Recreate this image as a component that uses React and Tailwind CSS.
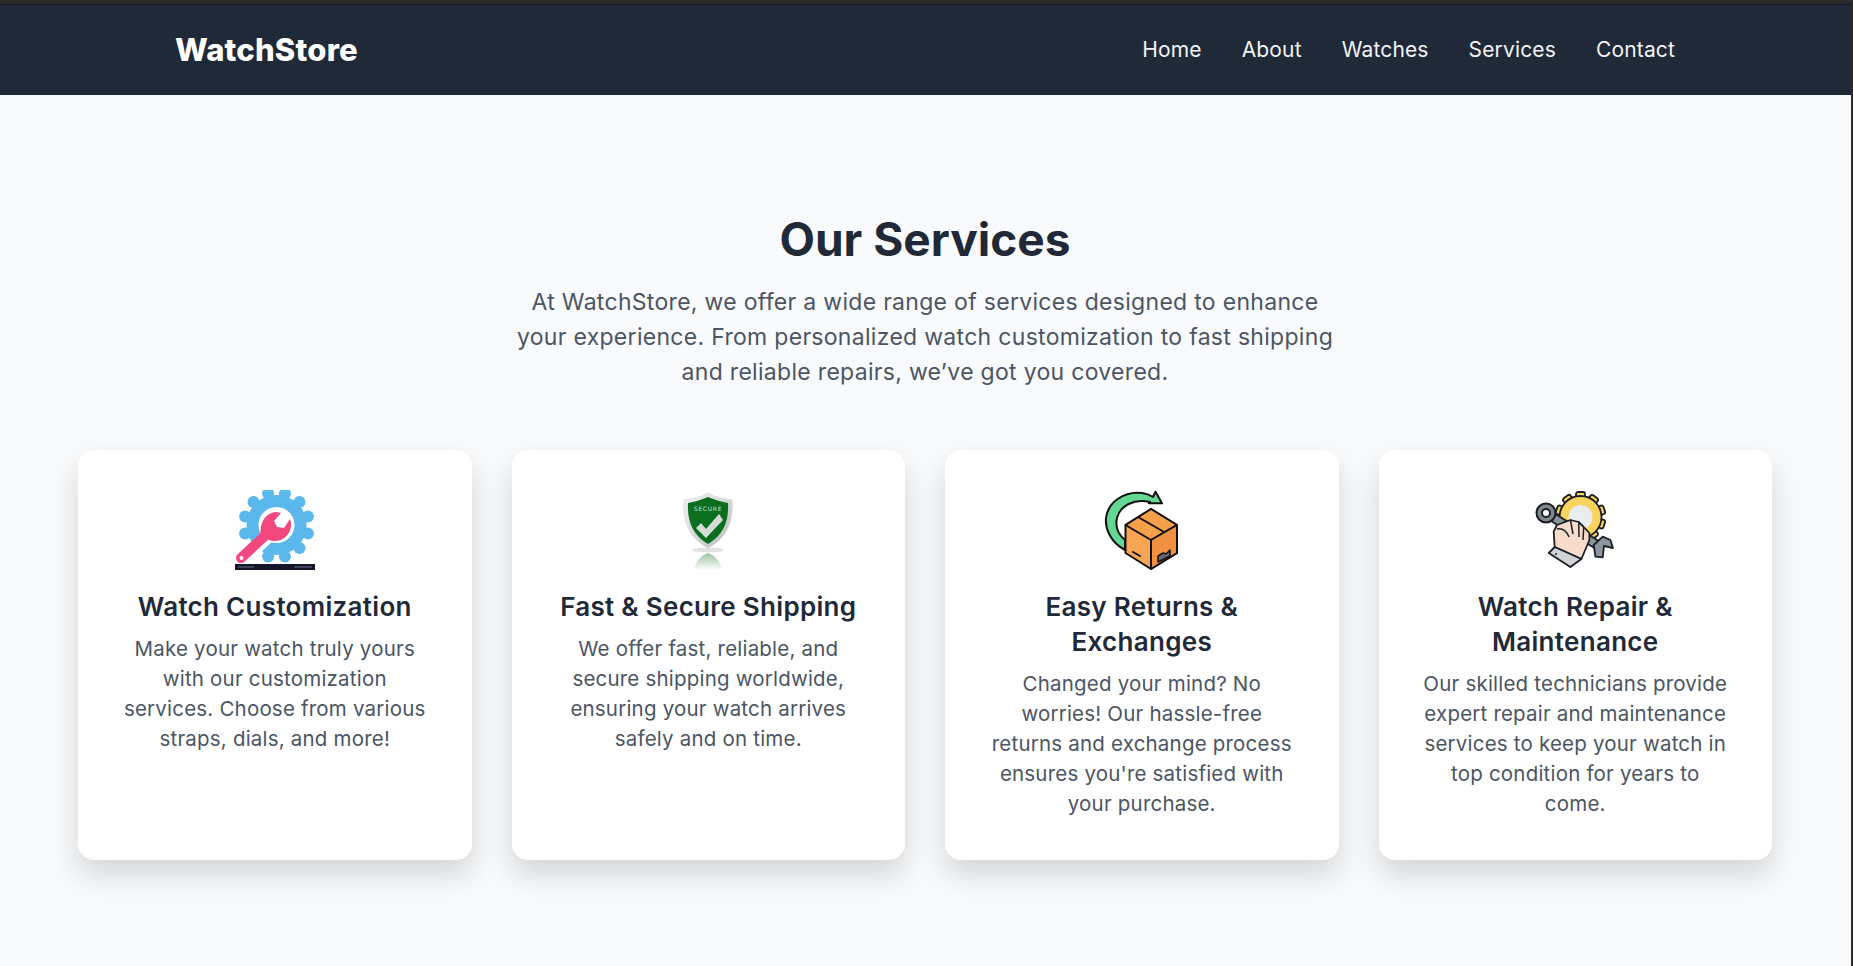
const services = [
  {
    title: ['Watch Customization'],
    text: ['Make your watch truly yours', 'with our customization', 'services. Choose from various', 'straps, dials, and more!'],
    icon: <GearWrenchIcon />,
  },
  {
    title: ['Fast & Secure Shipping'],
    text: ['We offer fast, reliable, and', 'secure shipping worldwide,', 'ensuring your watch arrives', 'safely and on time.'],
    icon: <ShieldIcon />,
  },
  {
    title: ['Easy Returns &', 'Exchanges'],
    text: ['Changed your mind? No', 'worries! Our hassle-free', 'returns and exchange process', "ensures you're satisfied with", 'your purchase.'],
    icon: <ReturnBoxIcon />,
  },
  {
    title: ['Watch Repair &', 'Maintenance'],
    text: ['Our skilled technicians provide', 'expert repair and maintenance', 'services to keep your watch in', 'top condition for years to', 'come.'],
    icon: <RepairIcon />,
  },
];

const navLinks = ['Home', 'About', 'Watches', 'Services', 'Contact'];

function GearWrenchIcon() {
  const bumps = [15, 45, 75, 105, 135, 165, 195, 225, 255, 285, 315, 345];
  return (
    <svg viewBox="0 0 80 80" className="w-20 h-20">
      {bumps.map((a) => (
        <circle
          key={a}
          cx={41.5 + 32.5 * Math.cos((a * Math.PI) / 180)}
          cy={35 + 32.5 * Math.sin((a * Math.PI) / 180)}
          r="6"
          fill="#5bb8ec"
        />
      ))}
      <circle cx="41.5" cy="35" r="24" fill="none" stroke="#5bb8ec" strokeWidth="12" />
      <path d="M8 70 L36 43" stroke="#fff" strokeWidth="14" strokeLinecap="round" />
      <path d="M6 68 L34 42" stroke="#f2477f" strokeWidth="10" strokeLinecap="round" />
      <path d="M26 45 C24 34 30 23 41 22 L46 23 L39 31 L42 37 L49 38 L55 29 C59 38 52 51 40 51 C35 51 31 49 31 49 Z" fill="#f2477f" />
      <circle cx="6.5" cy="68" r="2" fill="#fff" />
      <rect x="0" y="74" width="80" height="6" fill="#14152b" />
      <rect x="3" y="76.5" width="16" height="1" fill="#6b7280" />
      <rect x="59" y="76.5" width="18" height="1" fill="#6b7280" />
    </svg>
  );
}

function ShieldIcon() {
  return (
    <svg viewBox="0 0 80 80" className="w-20 h-20">
      <defs>
        <linearGradient id="rim" x1="0" y1="0" x2="1" y2="1">
          <stop offset="0" stopColor="#f4f4f4" />
          <stop offset="1" stopColor="#b8bcb8" />
        </linearGradient>
        <linearGradient id="fade" x1="0" y1="0" x2="0" y2="1">
          <stop offset="0" stopColor="#0a6e1e" stopOpacity="0.4" />
          <stop offset="1" stopColor="#0a6e1e" stopOpacity="0" />
        </linearGradient>
      </defs>
      <ellipse cx="40" cy="60" rx="16" ry="2.5" fill="#e0e2e0" />
      <path d="M40 3 C47 7 56 9 64 10 C66 32 58 49 40 58 C22 49 14 32 16 10 C24 9 33 7 40 3 Z" fill="url(#rim)" stroke="#d4d6d4" strokeWidth="0.6" />
      <path d="M40 7 C47 10 54 12 60 13 C61 32 55 45 40 54 C25 45 19 32 20 13 C26 12 33 10 40 7 Z" fill="#0a6e1e" />
      <text x="40" y="20.5" textAnchor="middle" fontSize="6" letterSpacing="0.7" fill="#cfe8d2" fontFamily="'DejaVu Sans', sans-serif">SECURE</text>
      <path d="M28 38 L33 33 L38 39 L51 24 L55 30 L38 48 Z" fill="#d8dcd8" />
      <path d="M26 80 C28 70 34 65 40 63 C46 65 52 70 54 80 Z" fill="url(#fade)" />
    </svg>
  );
}

function ReturnBoxIcon() {
  return (
    <svg viewBox="0 0 80 80" className="w-20 h-20">
      <path
        d="M23 60 C8 52 3 38 4 28 C6 12 22 1 40 3 C44 3.5 48 5 51 7 L53.5 1.7 L60 13.3 L46.8 13.3 L48 12 C32 8 18 16 15 28 C13 37 17 45 23 50 Z"
        fill="#62d894"
        stroke="#111"
        strokeWidth="2"
        strokeLinejoin="round"
      />
      <path d="M49 19 L75 35 L75 63 L49 79 L23.5 63 L23.5 35 Z" fill="#f8a553" stroke="#111" strokeWidth="2" strokeLinejoin="round" />
      <path d="M49 19 L75 35 L49 50 L23.5 35 Z" fill="#f6a04c" stroke="#111" strokeWidth="2" strokeLinejoin="round" />
      <path d="M49 50 L49 79 L75 63 L75 35 Z" fill="#f09040" stroke="#111" strokeWidth="2" strokeLinejoin="round" />
      <path d="M36 27 L62 42" stroke="#111" strokeWidth="2" />
      <path d="M56 72 L56 66 L61 63 L64 64 L68 60 L68 66 Z" fill="#6b6570" stroke="#111" strokeWidth="1.5" strokeLinejoin="round" />
      <path d="M31 62 L38 66" stroke="#111" strokeWidth="2" strokeLinecap="round" />
    </svg>
  );
}

function RepairIcon() {
  const teeth = [0, 36, 72, 108, 144, 180, 216, 252, 288, 324];
  return (
    <svg viewBox="0 0 80 80" className="w-20 h-20">
      {teeth.map((a) => (
        <rect key={a} x="41" y="2" width="9" height="8" rx="2" fill="#f8d45c" stroke="#1b1f24" strokeWidth="1.8" transform={`rotate(${a} 45.5 27)`} />
      ))}
      <circle cx="45.5" cy="27" r="21" fill="#f8d45c" stroke="#1b1f24" strokeWidth="1.8" />
      <circle cx="45.5" cy="27" r="12" fill="#e9edf1" />
      <path d="M11 23 L64 56" stroke="#1b1f24" strokeWidth="10" />
      <path d="M11 23 L64 56" stroke="#8b959e" strokeWidth="6.5" />
      <circle cx="11" cy="23" r="9.5" fill="#7d8790" stroke="#1b1f24" strokeWidth="2" />
      <circle cx="11" cy="23" r="4" fill="#fff" stroke="#1b1f24" strokeWidth="2" />
      <path d="M58.7 55 L67.7 46.7 L75.4 50 L78 58 L69 56 L67.7 67.3 L60.4 66.7 Z" fill="#8b959e" stroke="#1b1f24" strokeWidth="1.8" strokeLinejoin="round" />
      <path d="M19.7 57 L18.7 41.7 L22 35 L35.4 30 L43.7 32 L48.7 37 L54.4 43 L54.4 50 L46.4 69 Z" fill="#f8dccb" stroke="#1b1f24" strokeWidth="1.8" strokeLinejoin="round" />
      <path d="M35.4 30 L38 44 M43.7 32 L44 47 M48.7 37 L48 50 M22 39 C28 38 32 42 34 47" fill="none" stroke="#1b1f24" strokeWidth="1.5" />
      <path d="M19.7 57 L46.4 69 L35.4 77 L13.7 63 Z" fill="#d2d3d8" stroke="#1b1f24" strokeWidth="1.8" strokeLinejoin="round" />
      <circle cx="21" cy="64" r="1" fill="#1b1f24" />
    </svg>
  );
}

export default function App() {
  return (
    <div className="min-h-screen bg-[#2b2b2b] pt-1 pr-[2px] font-['Inter',sans-serif]">
      <header className="h-[91px] bg-[#1f2937] border-t border-[#111827] flex items-center justify-between pl-[175px] pr-[176px]">
        <div className="text-[31px] font-extrabold text-white tracking-[0.2px]">WatchStore</div>
        <nav className="flex gap-10">
          {navLinks.map((link) => (
            <a key={link} className="text-[21px] tracking-[0.15px] text-[#f3f4f6]">{link}</a>
          ))}
        </nav>
      </header>

      <main className="bg-[#f9fafb] min-h-[871px] pt-[118px] pl-[78px] pr-[79px]">
        <h1 className="text-center text-[46px] leading-[53px] font-bold text-[#1f2937]">Our Services</h1>
        <p className="mt-[19px] text-center text-[23px] tracking-[0.3px] leading-[35px] text-[#4b5563]">
          At WatchStore, we offer a wide range of services designed to enhance<br />
          your experience. From personalized watch customization to fast shipping<br />
          and reliable repairs, we’ve got you covered.
        </p>

        <div className="mt-[60px] grid grid-cols-4 gap-10">
          {services.map((s) => (
            <div key={s.title[0]} className="h-[410px] bg-white rounded-2xl shadow-[0_15px_30px_rgba(0,0,0,0.15)] pt-10 px-6 flex flex-col items-center text-center">
              {s.icon}
              <h3 className="mt-[19px] text-[26px] tracking-[0.3px] leading-[35px] font-semibold text-[#1f2937]">
                {s.title.map((t) => <div key={t}>{t}</div>)}
              </h3>
              <p className="mt-[10px] text-[20.5px] tracking-[0.2px] leading-[30px] text-[#4b5563]">
                {s.text.map((t) => <span key={t} className="block">{t}</span>)}
              </p>
            </div>
          ))}
        </div>
      </main>
    </div>
  );
}
